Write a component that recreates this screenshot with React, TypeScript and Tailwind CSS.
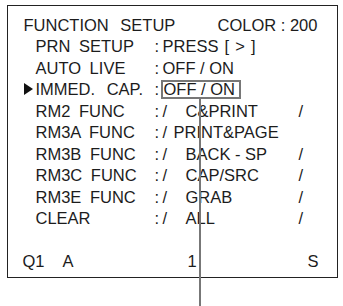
export default function App() {
  const rm = [
    { label: 'RM2 FUNC', value: 'C&PRINT', tail: true },
    { label: 'RM3A FUNC', value: 'PRINT&PAGE', tail: false },
    { label: 'RM3B FUNC', value: 'BACK - SP', tail: true },
    { label: 'RM3C FUNC', value: 'CAP/SRC', tail: true },
    { label: 'RM3E FUNC', value: 'GRAB', tail: true },
    { label: 'CLEAR', value: 'ALL', tail: true },
  ]

  return (
    <div
      className="relative h-[306px] w-[343px] overflow-hidden bg-white pt-[5px] pl-[7px] text-[16.5px] text-[#1c1c1c]"
      style={{ fontFamily: '"Liberation Sans", Arial, sans-serif' }}
    >
      {/* CRT screen frame */}
      <div className="h-[273px] w-[331px] border-[1.5px] border-[#222] pt-[8px] pl-[15.5px] leading-none">
        <div className="flex h-[21.5px] items-center">
          <span className="w-[194px] [word-spacing:7px]">FUNCTION SETUP</span>
          <span>COLOR : 200</span>
        </div>

        <div className="flex h-[21.5px] items-center">
          <span className="w-[12px]" />
          <span className="w-[119px] [word-spacing:4px]">PRN SETUP</span>
          <span className="w-[8px]">:</span>
          <span className="[word-spacing:1.5px]">PRESS [ &gt; ]</span>
        </div>

        <div className="flex h-[21.5px] items-center">
          <span className="w-[12px]" />
          <span className="w-[119px] [word-spacing:4px]">AUTO LIVE</span>
          <span className="w-[8px]">:</span>
          <span>OFF / ON</span>
        </div>

        <div className="flex h-[21.5px] items-center">
          <span className="w-[12px]">
            <span className="block h-0 w-0 border-y-[6px] border-l-[9px] border-y-transparent border-l-[#111]" />
          </span>
          <span className="w-[119px] [word-spacing:7px]">IMMED. CAP.</span>
          <span className="w-[6px]">:</span>
          <span className="relative flex h-[19px] w-[80px] items-center border-2 border-[#777] pl-[1px]">
            OFF / ON
            <span className="absolute top-full left-[36px] h-[210px] w-[2px] bg-[#777]" />
          </span>
        </div>

        {rm.map(r => (
          <div key={r.label} className="flex h-[21.5px] items-center">
            <span className="w-[12px]" />
            <span className="w-[119px] [word-spacing:4px]">{r.label}</span>
            <span className="w-[8px]">:</span>
            <span className={r.tail ? 'w-[23px]' : 'w-[11px]'}>/</span>
            <span className="w-[113px]">{r.value}</span>
            {r.tail && <span>/</span>}
          </div>
        ))}

        <div className="h-[21.5px]" />

        <div className="flex h-[21.5px] items-center">
          <span className="-ml-[1px] w-[40px]">Q1</span>
          <span className="w-[125px]">A</span>
          <span className="w-[120px]">1</span>
          <span>S</span>
        </div>
      </div>
    </div>
  )
}
